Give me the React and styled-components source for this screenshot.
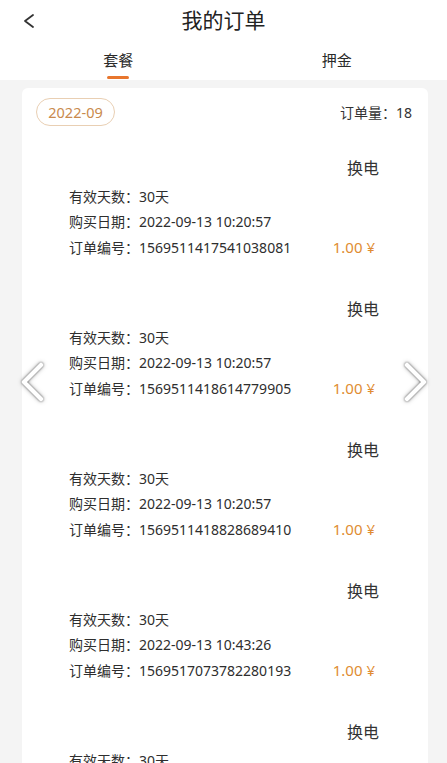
import React from "react";
import styled, { createGlobalStyle } from "styled-components";

const Global = createGlobalStyle`
  html, body {
    margin: 0;
    padding: 0;
    background: #f4f4f4;
  }
  body {
    font-family: "Noto Sans", "Noto Sans CJK SC", sans-serif;
    color: #333;
  }
`;

const Page = styled.div`
  position: relative;
  min-height: 763px;
  overflow: hidden;
`;

const Header = styled.header`
  background: #fff;
  height: 80px;
  display: flex;
  flex-direction: column;
`;

const TitleBar = styled.div`
  position: relative;
  height: 40px;
  display: flex;
  align-items: center;
  justify-content: center;
`;

const BackButton = styled.button`
  position: absolute;
  left: 20px;
  top: 12px;
  width: 18px;
  height: 18px;
  padding: 0;
  border: 0;
  background: transparent;
  display: flex;
  align-items: center;
  justify-content: center;
`;

const Title = styled.h1`
  margin: 0;
  font-size: 21px;
  font-weight: 400;
  line-height: 40px;
  color: #222;
`;

const Tabs = styled.nav`
  display: flex;
  padding-left: 9px;
  padding-right: 1px;
`;

const Tab = styled.div`
  flex: 1;
  display: flex;
  flex-direction: column;
  align-items: center;
  padding-top: 10px;
`;

const TabLabel = styled.span`
  font-size: 15px;
  line-height: 20px;
  color: #2a2a2a;
  font-weight: 400;
`;

const TabLine = styled.span`
  margin-top: 6px;
  width: 22px;
  height: 3px;
  border-radius: 2px;
  background: ${(p) => (p.$active ? "#e8762d" : "transparent")};
`;

const Card = styled.section`
  margin: 8px 19px 0 22px;
  background: #fff;
  border-radius: 6px;
  padding: 10px 16px 0 14px;
`;

const CardTop = styled.div`
  display: flex;
  align-items: center;
  justify-content: space-between;
`;

const MonthPill = styled.span`
  box-sizing: border-box;
  display: inline-flex;
  align-items: center;
  justify-content: center;
  width: 79px;
  height: 28px;
  border: 1px solid #e9cfb3;
  border-radius: 14px;
  color: #c98a4d;
  font-size: 14.5px;
`;

const Count = styled.span`
  font-size: 14px;
  color: #333;
`;

const Item = styled.div`
  padding: 28px 33px 7.5px 33px;
`;

const Kind = styled.div`
  text-align: right;
  font-size: 16px;
  line-height: 28px;
  color: #333;
`;

const Rows = styled.div`
  padding-top: 1px;
`;

const Row = styled.div`
  display: flex;
  align-items: center;
  justify-content: space-between;
  height: 25.5px;
  font-size: 14px;
  color: #2e2e2e;
`;

const Price = styled.span`
  font-size: 15px;
  color: #e08c32;
  margin-right: 4px;
`;

const Arrow = styled.div`
  position: absolute;
  top: 362px;
  ${(p) => (p.$side === "left" ? "left: 19px;" : "left: 403px;")}
  width: 26px;
  height: 40px;
  filter: drop-shadow(0 0 1px rgba(0, 0, 0, 0.55)) drop-shadow(0 0 2px rgba(0, 0, 0, 0.3));
`;

const orders = [
  { no: "1569511417541038081", date: "2022-09-13 10:20:57" },
  { no: "1569511418614779905", date: "2022-09-13 10:20:57" },
  { no: "1569511418828689410", date: "2022-09-13 10:20:57" },
  { no: "1569517073782280193", date: "2022-09-13 10:43:26" },
  { no: "1569517073782280194", date: "2022-09-13 10:43:26" },
];

export default function App() {
  return (
    <Page>
      <Global />
      <Header>
        <TitleBar>
          <BackButton aria-label="返回">
            <svg width="14" height="16" viewBox="0 0 14 16">
              <polyline points="11,2 3,8 11,14" fill="none" stroke="#333" strokeWidth="1.8" strokeLinecap="round" strokeLinejoin="round" />
            </svg>
          </BackButton>
          <Title>我的订单</Title>
        </TitleBar>
        <Tabs>
          <Tab>
            <TabLabel>套餐</TabLabel>
            <TabLine $active />
          </Tab>
          <Tab>
            <TabLabel>押金</TabLabel>
            <TabLine />
          </Tab>
        </Tabs>
      </Header>
      <Card>
        <CardTop>
          <MonthPill>2022-09</MonthPill>
          <Count>订单量：18</Count>
        </CardTop>
        {orders.map((o, i) => (
          <Item key={i}>
            <Kind>换电</Kind>
            <Rows>
              <Row>
                <span>有效天数：30天</span>
              </Row>
              <Row>
                <span>购买日期：{o.date}</span>
              </Row>
              <Row>
                <span>订单编号：{o.no}</span>
                <Price>1.00 ¥</Price>
              </Row>
            </Rows>
          </Item>
        ))}
      </Card>
      <Arrow $side="left">
        <svg width="26" height="40" viewBox="0 0 26 40">
          <polyline points="22,3 5,20 22,37" fill="none" stroke="#fff" strokeWidth="4.5" strokeLinecap="round" strokeLinejoin="round" />
        </svg>
      </Arrow>
      <Arrow $side="right">
        <svg width="26" height="40" viewBox="0 0 26 40">
          <polyline points="4,3 21,20 4,37" fill="none" stroke="#fff" strokeWidth="4.5" strokeLinecap="round" strokeLinejoin="round" />
        </svg>
      </Arrow>
    </Page>
  );
}
